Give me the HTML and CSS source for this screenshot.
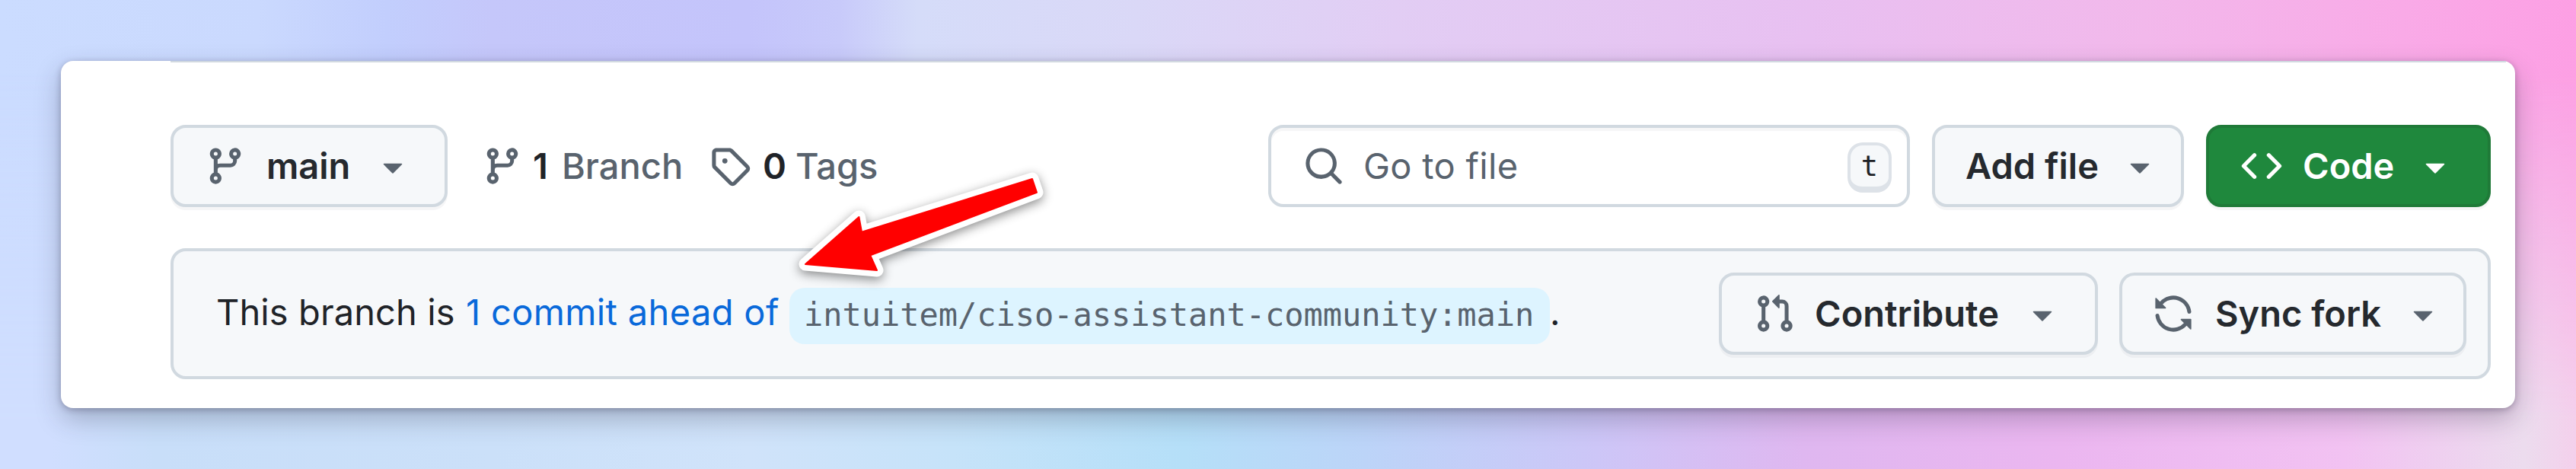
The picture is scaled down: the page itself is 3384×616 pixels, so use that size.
FILE: index.html
```html
<!DOCTYPE html>
<html lang="en">
<head>
<meta charset="utf-8">
<title>Branch overview</title>
<link rel="stylesheet" href="styles.css">
</head>
<body>
<svg class="defs" width="0" height="0">
  <symbol id="branch" viewBox="0 0 16 16"><path d="M9.5 3.25a2.25 2.25 0 1 1 3 2.122V6A2.5 2.5 0 0 1 10 8.5H6a1 1 0 0 0-1 1v1.128a2.251 2.251 0 1 1-1.5 0V5.372a2.25 2.25 0 1 1 1.5 0v1.836A2.493 2.493 0 0 1 6 7h4a1 1 0 0 0 1-1v-.628A2.25 2.25 0 0 1 9.5 3.25Zm-6 0a.75.75 0 1 0 1.5 0 .75.75 0 0 0-1.5 0Zm8.25-.75a.75.75 0 1 0 0 1.5.75.75 0 0 0 0-1.5ZM4.25 12a.75.75 0 1 0 0 1.5.75.75 0 0 0 0-1.5Z"/></symbol>
  <symbol id="tag" viewBox="0 0 16 16"><path d="M1 7.775V2.75C1 1.784 1.784 1 2.75 1h5.025c.464 0 .91.184 1.238.513l6.25 6.25a1.75 1.75 0 0 1 0 2.474l-5.026 5.026a1.75 1.75 0 0 1-2.474 0l-6.25-6.25A1.752 1.752 0 0 1 1 7.775Zm1.5 0c0 .066.026.13.073.177l6.25 6.25a.25.25 0 0 0 .354 0l5.025-5.025a.25.25 0 0 0 0-.354l-6.25-6.25a.25.25 0 0 0-.177-.073H2.75a.25.25 0 0 0-.25.25ZM6 5a1 1 0 1 1 0 2 1 1 0 0 1 0-2Z"/></symbol>
  <symbol id="search" viewBox="0 0 16 16"><path d="M10.68 11.74a6 6 0 0 1-7.922-8.982 6 6 0 0 1 8.982 7.922l3.04 3.04a.749.749 0 0 1-.326 1.275.749.749 0 0 1-.734-.215ZM11.5 7a4.499 4.499 0 1 0-8.997 0A4.499 4.499 0 0 0 11.5 7Z"/></symbol>
  <symbol id="code" viewBox="0 0 16 16"><path d="m11.28 3.22 4.25 4.25a.75.75 0 0 1 0 1.06l-4.25 4.25a.749.749 0 0 1-1.275-.326.749.749 0 0 1 .215-.734L13.94 8l-3.72-3.72a.749.749 0 0 1 .326-1.275.749.749 0 0 1 .734.215Zm-6.56 0a.751.751 0 0 1 1.042.018.751.751 0 0 1 .018 1.042L2.06 8l3.72 3.72a.749.749 0 0 1-.326 1.275.749.749 0 0 1-.734-.215L.47 8.53a.75.75 0 0 1 0-1.06Z"/></symbol>
  <symbol id="pull" viewBox="0 0 16 16"><path d="M1.5 3.25a2.25 2.25 0 1 1 3 2.122v5.256a2.251 2.251 0 1 1-1.5 0V5.372A2.25 2.25 0 0 1 1.5 3.25Zm5.677-.177L9.573.677A.25.25 0 0 1 10 .854V2.5h1A2.5 2.5 0 0 1 13.5 5v5.628a2.251 2.251 0 1 1-1.5 0V5a1 1 0 0 0-1-1h-1v1.646a.25.25 0 0 1-.427.177L7.177 3.427a.25.25 0 0 1 0-.354ZM3.75 2.5a.75.75 0 1 0 0 1.5.75.75 0 0 0 0-1.5Zm0 9.5a.75.75 0 1 0 0 1.5.75.75 0 0 0 0-1.5Zm8.25.75a.75.75 0 1 0 1.5 0 .75.75 0 0 0-1.5 0Z"/></symbol>
  <symbol id="sync" viewBox="0 0 16 16"><path d="M1.705 8.005a.75.75 0 0 1 .834.656 5.5 5.5 0 0 0 9.592 2.97l-1.204-1.204a.25.25 0 0 1 .177-.427h3.646a.25.25 0 0 1 .25.25v3.646a.25.25 0 0 1-.427.177l-1.38-1.38A7.002 7.002 0 0 1 1.05 8.84a.75.75 0 0 1 .656-.834ZM8 2.5a5.487 5.487 0 0 0-4.131 1.869l1.204 1.204A.25.25 0 0 1 4.896 6H1.25A.25.25 0 0 1 1 5.75V2.104a.25.25 0 0 1 .427-.177l1.38 1.38A7.002 7.002 0 0 1 14.95 7.16a.75.75 0 0 1-1.49.178A5.5 5.5 0 0 0 8 2.5Z"/></symbol>
  <symbol id="caret" viewBox="0 0 16 16"><path d="m4.427 7.427 3.396 3.396a.25.25 0 0 0 .354 0l3.396-3.396A.25.25 0 0 0 11.396 7H4.604a.25.25 0 0 0-.177.427Z"/></symbol>
</svg>
<main class="card">
  <div class="divider"></div>
  <div class="toolbar">
    <button class="btn btn-main"><svg class="icon"><use href="#branch"/></svg><span class="label">main</span><svg class="icon caret"><use href="#caret"/></svg></button>
    <a class="stat stat-branch"><svg class="icon"><use href="#branch"/></svg><strong>1</strong><span class="stat-name">Branch</span></a>
    <a class="stat stat-tags"><svg class="icon"><use href="#tag"/></svg><strong>0</strong><span class="stat-name">Tags</span></a>
    <div class="search"><svg class="icon"><use href="#search"/></svg><span class="placeholder">Go to file</span><kbd>t</kbd></div>
    <button class="btn btn-add"><span class="label">Add file</span><svg class="icon caret"><use href="#caret"/></svg></button>
    <button class="btn btn-code"><svg class="icon"><use href="#code"/></svg><span class="label">Code</span><svg class="icon caret"><use href="#caret"/></svg></button>
  </div>
  <div class="status">
    <p class="message"><span class="lead">This branch is</span><a class="ahead">1 commit ahead of</a><code>intuitem/ciso-assistant-community:main</code><span class="stop">.</span></p>
    <button class="btn btn-contribute"><svg class="icon"><use href="#pull"/></svg><span class="label">Contribute</span><svg class="icon caret"><use href="#caret"/></svg></button>
    <button class="btn btn-sync"><svg class="icon"><use href="#sync"/></svg><span class="label">Sync fork</span><svg class="icon caret"><use href="#caret"/></svg></button>
  </div>
</main>
<svg class="arrow" viewBox="1030 210 360 180"><path class="arrow-edge" d="M1058 347 1128.400 285 1132 304.700 1356 235 1362 252.700 1143.300 335.300 1152 355Z"/><path class="arrow-fill" d="M1058 347 1128.400 285 1132 304.700 1356 235 1362 252.700 1143.300 335.300 1152 355Z"/></svg>
</body>
</html>
```
FILE: styles.css
```css
* { box-sizing: border-box; }
body {
  margin: 0;
  width: 3384px;
  height: 616px;
  padding: 80px;
  overflow: hidden;
  position: relative;
  font: 400 47px/72px Inter, "Liberation Sans", sans-serif;
  color: #1f2328;
  background: linear-gradient(91deg, #cbdcff 0, #cad9fe 10%, #c2cefd 15%, #c5c7fa 19%, #c4c4fb 29%, #c8cafa 32.500%, #d5dcf9 35.500%, #dad8f7 44%, #e2cdf4 54%, #e8c0f1 70%, #f2b8eb 83%, #f9aae7 93%, #fd9fe4 100%);
}
body::before {
  content: "";
  position: absolute;
  inset: 0;
  background: linear-gradient(90deg, #d0deff 0, #d0deff 2%, #c8def9 6%, #cbe0f9 19%, #d0e3fa 29%, #c6e3f9 37%, #b5dff8 46%, #bcd4f8 53%, #cdc6f7 62%, #dfb7f0 70%, #ebb6f0 80%, #f2c2f2 91%, #ecdcee 98%, #f4d0ec 100%);
  mask-image: linear-gradient(180deg, transparent 15%, #000 90%);
}
.defs { position: absolute; }
.card {
  position: relative;
  width: 3224px;
  height: 456px;
  border-radius: 16px;
  background: #fff;
  box-shadow: 0 2px 8px rgba(30, 20, 50, .28), 0 14px 34px rgba(40, 40, 60, .28);
}
.divider { height: 2px; margin: 0 12px 0 144px; background: #d1d9e0; }
.toolbar { display: flex; padding: 82px 32px 0 144px; height: 190px; }
.icon { width: 54px; height: 54px; flex: none; fill: #59636e; }
.btn {
  display: flex;
  align-items: center;
  flex: none;
  height: 108px;
  padding: 0;
  border: 4px solid #d1d9e0;
  border-radius: 20px;
  background: #f6f8fa;
  box-shadow: 0 4px 0 rgba(31, 35, 40, .04);
  font: 600 47px/72px Inter, "Liberation Sans", sans-serif;
  color: #25292e;
}
.label, .stat strong, .stat-name, .placeholder, .lead, .ahead { flex: none; white-space: nowrap; text-align: left; }
.btn-main { width: 364px; padding-left: 41px; }
.btn-main .label { width: 108px; margin: 0 31px 0 27px; }
.stat { display: flex; align-items: center; height: 108px; flex: none; color: #59636e; font-weight: 500; }
.stat strong { color: #1f2328; font-weight: 600; }
.stat-branch { width: 299px; margin-left: 45px; }
.stat-branch strong { width: 38px; margin-left: 13px; }
.stat-tags { width: 224px; }
.stat-tags strong { width: 43px; margin-left: 16px; }
.search {
  display: flex;
  align-items: center;
  width: 843px;
  height: 108px;
  margin-left: 510px;
  padding-left: 42px;
  border: 4px solid #d1d9e0;
  border-radius: 20px;
  box-shadow: inset 0 4px 0 rgba(31, 35, 40, .04);
  color: #59636e;
}
.placeholder { width: 661px; padding-left: 25px; letter-spacing: .3px; }
kbd {
  flex: none;
  width: 58px;
  height: 66px;
  margin-top: 3px;
  border: 4px solid #dde2e8;
  border-bottom-width: 8px;
  border-radius: 20px;
  background: #f6f8fa;
  font: 37px/56px "DejaVu Sans Mono", monospace;
  text-align: center;
  color: #1f2328;
}
.btn-add { width: 331px; margin-left: 29px; padding-left: 40px; }
.btn-add .label { width: 175px; margin-right: 27px; }
.btn-code { width: 374px; margin-left: 29px; padding-left: 42px; border-color: #1f7a38; background: #1f883d; color: #fff; }
.btn-code .icon { fill: #fff; }
.btn-code .label { width: 120px; margin: 0 27px; }
.status {
  display: flex;
  align-items: center;
  width: 3048px;
  height: 172px;
  margin: 54px 0 0 144px;
  padding: 0 28px 0 56px;
  border: 4px solid #d1d9e0;
  border-radius: 20px;
  background: #f6f8fa;
}
.message { display: flex; align-items: center; margin: 0 auto 0 0; }
.lead, .ahead, .stop { margin-bottom: 5px; }
.lead { width: 328px; letter-spacing: .1px; }
.ahead { width: 425px; color: #0969da; letter-spacing: .35px; }
code {
  height: 74px;
  width: 999px;
  margin-top: 6px;
  padding-left: 19px;
  border-radius: 20px;
  background: #ddf4ff;
  font: 42px/72px "DejaVu Sans Mono", monospace;
  letter-spacing: -.04px;
  color: #59636e;
}
.btn-contribute { width: 498px; padding-left: 42px; }
.btn-contribute .label { width: 244px; margin: 0 28px 0 26px; }
.btn-sync { width: 456px; margin-left: 28px; padding-left: 40px; }
.btn-sync .label { width: 217px; margin: 0 29px 0 28px; }
.arrow {
  position: absolute;
  left: 1030px;
  top: 210px;
  width: 360px;
  height: 180px;
  overflow: visible;
  filter: drop-shadow(0 4px 7px rgba(0, 0, 0, .45));
}
.arrow-edge { fill: #fff; stroke: #fff; stroke-width: 17px; stroke-linejoin: round; }
.arrow-fill { fill: #f00; stroke: #f00; stroke-width: 2px; stroke-linejoin: round; }
```
